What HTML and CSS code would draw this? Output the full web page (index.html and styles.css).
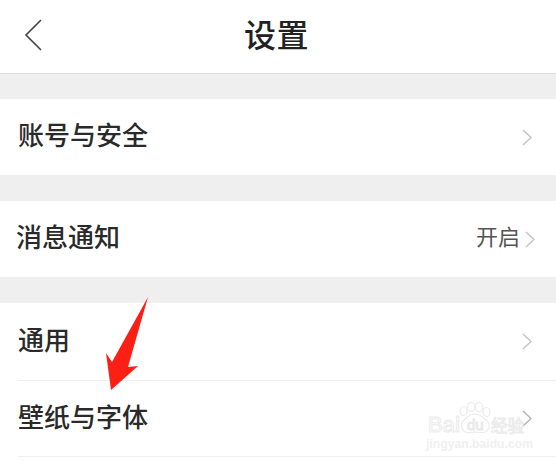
FILE: index.html
```html
<!DOCTYPE html>
<html lang="zh-CN">
<head>
  <meta charset="UTF-8">
  <meta name="viewport" content="width=device-width, initial-scale=1.0">
  <title>设置</title>
  <link rel="stylesheet" href="styles.css">
</head>
<body>

<header class="top-bar">
  <svg class="back-icon" width="20" height="32" viewBox="0 0 20 32">
    <path d="M18 1 L3 16 L18 31" fill="none" stroke="#444" stroke-width="1.6"/>
  </svg>
  <h1 class="title">设置</h1>
</header>

<section class="group group-first">
  <div class="row">
    <span class="row-label">账号与安全</span>
    <svg class="chevron" width="10" height="17" viewBox="0 0 10 17"><path d="M1 1 L9 8.5 L1 16" fill="none" stroke="#c4c4c4" stroke-width="1.5"/></svg>
  </div>
</section>

<section class="group">
  <div class="row row-notice">
    <span class="row-label">消息通知</span>
    <span class="row-value">开启</span>
    <svg class="chevron" width="10" height="17" viewBox="0 0 10 17"><path d="M1 1 L9 8.5 L1 16" fill="none" stroke="#c4c4c4" stroke-width="1.5"/></svg>
  </div>
</section>

<section class="group">
  <div class="row row-line row-tall">
    <span class="row-label">通用</span>
    <svg class="chevron" width="10" height="17" viewBox="0 0 10 17"><path d="M1 1 L9 8.5 L1 16" fill="none" stroke="#c4c4c4" stroke-width="1.5"/></svg>
  </div>
  <div class="row row-line">
    <span class="row-label">壁纸与字体</span>
    <svg class="chevron" width="10" height="17" viewBox="0 0 10 17"><path d="M1 1 L9 8.5 L1 16" fill="none" stroke="#b4b4b4" stroke-width="1.5"/></svg>
  </div>
</section>

<!-- red arrow drawn over the screenshot -->
<svg class="arrow" width="50" height="96" viewBox="0 0 50 96">
  <polygon points="44,1 24,71 34,70 7,94 2,57 8,66" fill="#fb1f16"/>
</svg>

<!-- baidu watermark -->
<div class="watermark">
  <svg class="mark-paw" width="33" height="32" viewBox="0 0 33 32">
    <g fill="#fff" stroke="#ebebeb" stroke-width="1.2">
      <ellipse cx="4.5" cy="9" rx="3.5" ry="4.5"/>
      <ellipse cx="12" cy="5" rx="3.8" ry="4.5"/>
      <ellipse cx="20" cy="5" rx="3.8" ry="4.5"/>
      <ellipse cx="27.5" cy="10" rx="3.5" ry="4.5"/>
      <path d="M16 12 C10 12 9 15 5 18 C0 22 3 31 10 30.5 C14 30 18 30 23 30.5 C30 31 33 22 27 18 C23 15 22 12 16 12 Z"/>
    </g>
  </svg>
  <span class="mark-du">du</span>
  <div class="mark-top">
    <span class="mark-bai">Bai</span>
    <span class="mark-cn">经验</span>
  </div>
  <div class="mark-url">jingyan.baidu.com</div>
</div>

</body>
</html>
```

FILE: styles.css
```css
body {
  margin: 0;
  background: #fff;
  font-family: "Noto Sans CJK SC", "Liberation Sans", sans-serif;
  position: relative;
  height: 461px;
  overflow: hidden;
}

.top-bar {
  height: 73px;
  border-bottom: 1px solid #dcdcdc;
  display: flex;
  align-items: center;
  justify-content: center;
  position: relative;
}
.back-icon {
  position: absolute;
  left: 23px;
  top: 19px;
}
.title {
  margin: 0;
  padding: 0 3px 8px 0;
  font-size: 32px;
  font-weight: 500;
  color: #222;
  line-height: 1;
  letter-spacing: 0.5px;
}

/* gray bands between groups */
.group {
  border-top: 26px solid #efefef;
  background: #fff;
}
.group-first {
  border-top-width: 25px;
}

.row {
  height: 76px;
  display: flex;
  align-items: center;
  padding: 0 24px 0 18px;
}
.row-label {
  flex: 1;
  padding-bottom: 6px;
  font-size: 26px;
  font-weight: 500;
  color: #2a2a2a;
  line-height: 1;
}
.row-value {
  padding-bottom: 8px;
  font-size: 22px;
  color: #555;
  line-height: 1;
  margin-right: 5px;
}
.row-notice {
  padding: 0 21px 0 17px;
}
.row-notice .row-label {
  margin-left: -1px;
}
.row-line {
  height: 75px;
  border-bottom: 1px solid #eee;
  margin-left: 18px;
  padding-left: 0;
}
.row-tall {
  height: 77px;
}

.arrow {
  position: absolute;
  left: 104px;
  top: 296px;
}

.watermark {
  position: absolute;
  left: 426px;
  top: 402px;
  width: 100px;
  height: 48px;
  color: #f0f0f0;
}
.mark-top {
  display: flex;
  justify-content: space-between;
  padding: 11px 2px 0;
  height: 24px;
  position: relative;
}
.mark-bai {
  font-family: "Liberation Sans", sans-serif;
  font-size: 22px;
  line-height: 24px;
  color: #fff;
  -webkit-text-stroke: 1px #ebebeb;
}
.mark-paw {
  position: absolute;
  left: 33px;
  top: 0;
}
.mark-du {
  position: absolute;
  left: 41px;
  top: 14px;
  font-family: "Liberation Sans", sans-serif;
  font-size: 15px;
  line-height: 18px;
  color: #fff;
  -webkit-text-stroke: 1px #e8e8e8;
}
.mark-cn {
  width: 33px;
  font-size: 16.5px;
  line-height: 24px;
  color: #fff;
  -webkit-text-stroke: 1px #ebebeb;
}
.mark-url {
  font-family: "Liberation Sans", sans-serif;
  font-size: 12.2px;
  line-height: 14px;
  font-weight: 700;
  white-space: nowrap;
}
```
